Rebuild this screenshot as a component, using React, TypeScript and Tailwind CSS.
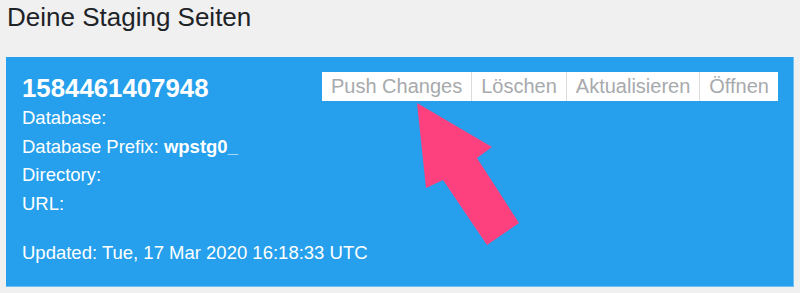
const actions = ["Push Changes", "Löschen", "Aktualisieren", "Öffnen"];

const details = [
  { label: "Database:", value: "" },
  { label: "Database Prefix:", value: "wpstg0_" },
  { label: "Directory:", value: "" },
  { label: "URL:", value: "" },
];

const App = () => {
  return (
    <div className="relative h-[293px] w-[800px] overflow-hidden bg-[#f0f0f1] font-['Liberation_Sans',Arial,sans-serif]">
      {/* Heading */}
      <h2 className="pl-[7px] pt-[2px] text-[26px] leading-[30px] text-[#1d2327]">Deine Staging Seiten</h2>

      {/* Staging site card */}
      <div className="ml-[6px] mt-[25px] h-[230px] w-[788px] border-r border-b border-[#6fc0f2] bg-[#26a0ec] pl-4 pr-[15px] pt-[15px] text-white">
        <div className="flex items-start justify-between">
          <div className="pt-[2px] text-[25.8px] font-bold leading-[28px]">1584461407948</div>
          <div className="flex h-[29px] bg-white text-[20px] leading-[29px] text-[#a7aaad]">
            {actions.map((a, i) => (
              <span key={a} className={`px-[9px] ${i > 0 ? "border-l border-[#dcdcde]" : ""}`}>
                {a}
              </span>
            ))}
          </div>
        </div>
        <div className="mt-[2px] text-[18.5px] leading-[28.5px]">
          {details.map((d) => (
            <div key={d.label}>
              {d.label}
              {d.value && <span className="font-bold"> {d.value}</span>}
            </div>
          ))}
          <div className="mt-[21px]">Updated: Tue, 17 Mar 2020 16:18:33 UTC</div>
        </div>
      </div>

      {/* Annotation arrow */}
      <svg className="absolute left-0 top-0" width="800" height="293" viewBox="0 0 800 293">
        <polygon
          points="417,103 492,147 477,158 519,223 487,245 443,180 426,188"
          fill="#fd417f"
        />
      </svg>
    </div>
  );
};

export default App;
